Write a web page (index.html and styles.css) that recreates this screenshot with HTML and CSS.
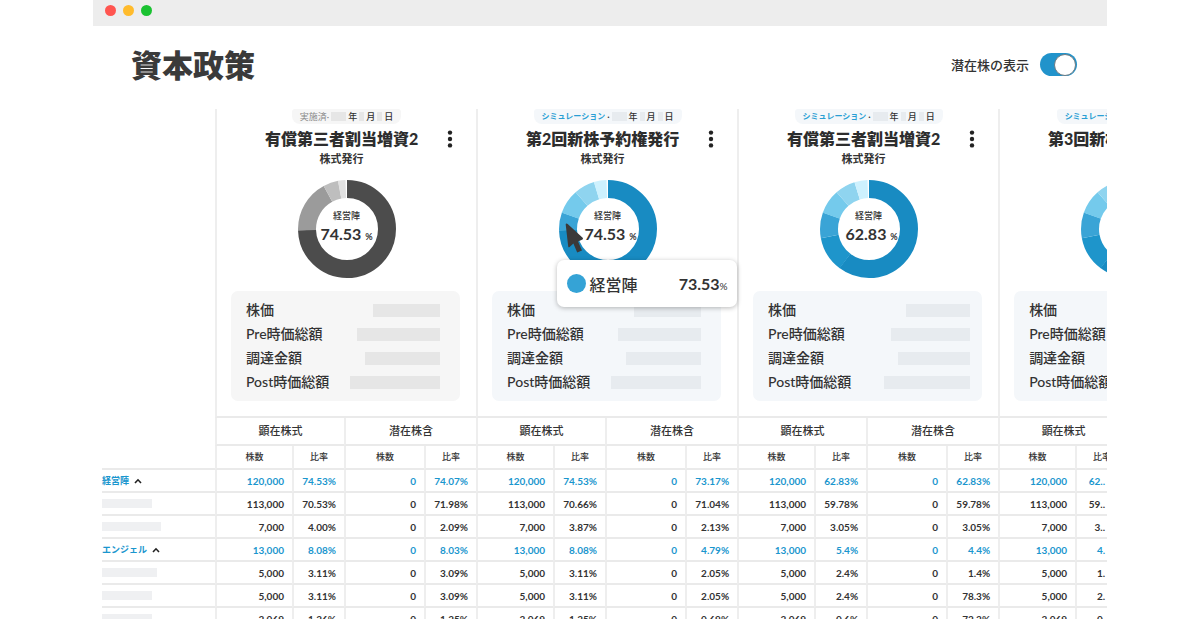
FILE: index.html
```html
<!DOCTYPE html>
<html lang="ja">
<head>
<meta charset="utf-8">
<meta name="viewport" content="width=device-width, initial-scale=1">
<title>資本政策</title>
<link rel="stylesheet" href="styles.css">
</head>
<body>
<svg class="defs" aria-hidden="true">
  <defs>
    <symbol id="chart-blue" viewBox="0 0 98 98">
      <g fill="none" stroke-width="18" transform="rotate(-90 49 49)">
        <circle class="s1" cx="49" cy="49" r="40" pathLength="100" stroke-dasharray="60.3 100"/>
        <circle class="s2" cx="49" cy="49" r="40" pathLength="100" stroke-dasharray="11.8 100" stroke-dashoffset="-60.2"/>
        <circle class="s3" cx="49" cy="49" r="40" pathLength="100" stroke-dasharray="8.5 100" stroke-dashoffset="-72"/>
        <circle class="s4" cx="49" cy="49" r="40" pathLength="100" stroke-dasharray="8.1 100" stroke-dashoffset="-80.4"/>
        <circle class="s5" cx="49" cy="49" r="40" pathLength="100" stroke-dasharray="6.7 100" stroke-dashoffset="-88.5"/>
        <circle class="s6" cx="49" cy="49" r="40" pathLength="100" stroke-dasharray="4.3 100" stroke-dashoffset="-95.2"/>
      </g>
    </symbol>
    <symbol id="caret" viewBox="0 0 8 6"><path d="M1 5 4 1.8 7 5" fill="none" stroke="#222" stroke-width="1.6"/></symbol>
    <symbol id="dots" viewBox="0 0 6 18"><g fill="#222"><circle cx="3" cy="2.6" r="2.2"/><circle cx="3" cy="9" r="2.2"/><circle cx="3" cy="15.4" r="2.2"/></g></symbol>
  </defs>
</svg>
<div class="window">
  <div class="titlebar"><span class="light red"></span><span class="light yellow"></span><span class="light green"></span></div>
  <header class="head">
    <h1>資本政策</h1>
    <label class="toggle">潜在株の表示<input type="checkbox" role="switch" checked></label>
  </header>
  <main class="board">
    <table class="captable">
      <colgroup>
        <col class="c-label">
        <col class="c-shares"><col class="c-ratio"><col class="c-latent"><col class="c-ratio">
        <col class="c-shares"><col class="c-ratio"><col class="c-latent"><col class="c-ratio">
        <col class="c-shares"><col class="c-ratio"><col class="c-latent"><col class="c-ratio">
        <col class="c-shares"><col class="c-ratio">
      </colgroup>
      <thead>
        <tr class="rounds">
          <td class="corner"></td>
          <th colspan="4">
            <div class="card done">
              <div class="pill"><span class="state">実施済·</span><i class="blank wide"></i>年<i class="blank"></i>月<i class="blank"></i>日</div>
              <div class="name"><h2>有償第三者割当増資2</h2><button class="more" aria-label="メニュー"><svg><use href="#dots"/></svg></button></div>
              <p class="kind">株式発行</p>
              <div class="donut">
                <svg viewBox="0 0 98 98">
                  <g fill="none" stroke-width="18" transform="rotate(-90 49 49)">
                    <circle class="g1" cx="49" cy="49" r="40" pathLength="100" stroke-dasharray="74.6 100"/>
                    <circle class="g2" cx="49" cy="49" r="40" pathLength="100" stroke-dasharray="17.6 100" stroke-dashoffset="-74.5"/>
                    <circle class="g3" cx="49" cy="49" r="40" pathLength="100" stroke-dasharray="5 100" stroke-dashoffset="-92.1"/>
                    <circle class="g4" cx="49" cy="49" r="40" pathLength="100" stroke-dasharray="2.5 100" stroke-dashoffset="-97"/>
                  </g>
                </svg>
                <div class="center"><span>経営陣</span><b>74.53 <small>%</small></b></div>
              </div>
              <dl class="stats">
                <div><dt>株価</dt><dd class="w1"></dd></div>
                <div><dt>Pre時価総額</dt><dd class="w3"></dd></div>
                <div><dt>調達金額</dt><dd class="w2"></dd></div>
                <div><dt>Post時価総額</dt><dd class="w4"></dd></div>
              </dl>
            </div>
          </th>
          <th colspan="4">
            <div class="card">
              <div class="pill"><span class="state">シミュレーション</span> · <i class="blank wide"></i>年<i class="blank"></i>月<i class="blank"></i>日</div>
              <div class="name"><h2>第2回新株予約権発行</h2><button class="more" aria-label="メニュー"><svg><use href="#dots"/></svg></button></div>
              <p class="kind">株式発行</p>
              <div class="donut">
                <svg viewBox="0 0 98 98">
                  <g fill="none" stroke-width="18" transform="rotate(-90 49 49)">
                    <circle class="s1" cx="49" cy="49" r="40" pathLength="100" stroke-dasharray="74.6 100"/>
                    <circle class="s3" cx="49" cy="49" r="40" pathLength="100" stroke-dasharray="6 100" stroke-dashoffset="-74.5"/>
                    <circle class="s4" cx="49" cy="49" r="40" pathLength="100" stroke-dasharray="8.1 100" stroke-dashoffset="-80.4"/>
                    <circle class="s5" cx="49" cy="49" r="40" pathLength="100" stroke-dasharray="6.9 100" stroke-dashoffset="-88.5"/>
                    <circle class="s6" cx="49" cy="49" r="40" pathLength="100" stroke-dasharray="4.2 100" stroke-dashoffset="-95.3"/>
                  </g>
                </svg>
                <div class="center"><span>経営陣</span><b>74.53 <small>%</small></b></div>
                <svg class="cursor" viewBox="0 0 18 32"><path d="M1.5 0.5Q0.6 0.5 0.7 1.6L3.2 23.4Q3.5 24.8 4.6 23.9L8.4 20.6 12.2 29.6 17 27.5 13 18.4 17.5 16.4Q18.5 15.6 17.4 14.6L2.7 1Z" fill="#3b3939"/></svg>
                <div class="tip" role="tooltip"><i></i><span>経営陣</span><b>73.53<small>%</small></b></div>
              </div>
              <dl class="stats">
                <div><dt>株価</dt><dd class="w1"></dd></div>
                <div><dt>Pre時価総額</dt><dd class="w3"></dd></div>
                <div><dt>調達金額</dt><dd class="w2"></dd></div>
                <div><dt>Post時価総額</dt><dd class="w4"></dd></div>
              </dl>
            </div>
          </th>
          <th colspan="4">
            <div class="card">
              <div class="pill"><span class="state">シミュレーション</span> · <i class="blank wide"></i>年<i class="blank"></i>月<i class="blank"></i>日</div>
              <div class="name"><h2>有償第三者割当増資2</h2><button class="more" aria-label="メニュー"><svg><use href="#dots"/></svg></button></div>
              <p class="kind">株式発行</p>
              <div class="donut">
                <svg><use href="#chart-blue"/></svg>
                <div class="center"><span>経営陣</span><b>62.83 <small>%</small></b></div>
              </div>
              <dl class="stats narrow">
                <div><dt>株価</dt><dd class="w1"></dd></div>
                <div><dt>Pre時価総額</dt><dd class="w3"></dd></div>
                <div><dt>調達金額</dt><dd class="w2"></dd></div>
                <div><dt>Post時価総額</dt><dd class="w4"></dd></div>
              </dl>
            </div>
          </th>
          <th colspan="2">
            <div class="card cut">
              <div class="pill"><span class="state">シミュレーション</span></div>
              <div class="name"><h2>第3回新株予約権発行</h2></div>
              <p class="kind"></p>
              <div class="donut"><svg><use href="#chart-blue"/></svg></div>
              <dl class="stats">
                <div><dt>株価</dt></div>
                <div><dt>Pre時価総額</dt></div>
                <div><dt>調達金額</dt></div>
                <div><dt>Post時価総額</dt></div>
              </dl>
            </div>
          </th>
        </tr>
        <tr class="groups">
          <td class="corner"></td>
          <th colspan="2">顕在株式</th><th colspan="2">潜在株含</th>
          <th colspan="2">顕在株式</th><th colspan="2">潜在株含</th>
          <th colspan="2">顕在株式</th><th colspan="2">潜在株含</th>
          <th colspan="2">顕在株式</th>
        </tr>
        <tr class="units">
          <td></td>
          <th>株数</th><th>比率</th><th>株数</th><th>比率</th>
          <th>株数</th><th>比率</th><th>株数</th><th>比率</th>
          <th>株数</th><th>比率</th><th>株数</th><th>比率</th>
          <th>株数</th><th>比率</th>
        </tr>
      </thead>
      <tbody>
        <tr class="sum"><th><button>経営陣<svg><use href="#caret"/></svg></button></th><td>120,000</td><td>74.53%</td><td>0</td><td>74.07%</td><td>120,000</td><td>74.53%</td><td>0</td><td>73.17%</td><td>120,000</td><td>62.83%</td><td>0</td><td>62.83%</td><td>120,000</td><td>62..</td></tr>
        <tr><th><i class="holder"></i></th><td>113,000</td><td>70.53%</td><td>0</td><td>71.98%</td><td>113,000</td><td>70.66%</td><td>0</td><td>71.04%</td><td>113,000</td><td>59.78%</td><td>0</td><td>59.78%</td><td>113,000</td><td>59..</td></tr>
        <tr><th><i class="holder long"></i></th><td>7,000</td><td>4.00%</td><td>0</td><td>2.09%</td><td>7,000</td><td>3.87%</td><td>0</td><td>2.13%</td><td>7,000</td><td>3.05%</td><td>0</td><td>3.05%</td><td>7,000</td><td>3..</td></tr>
        <tr class="sum"><th><button>エンジェル<svg><use href="#caret"/></svg></button></th><td>13,000</td><td>8.08%</td><td>0</td><td>8.03%</td><td>13,000</td><td>8.08%</td><td>0</td><td>4.79%</td><td>13,000</td><td>5.4%</td><td>0</td><td>4.4%</td><td>13,000</td><td>4.</td></tr>
        <tr><th><i class="holder mid"></i></th><td>5,000</td><td>3.11%</td><td>0</td><td>3.09%</td><td>5,000</td><td>3.11%</td><td>0</td><td>2.05%</td><td>5,000</td><td>2.4%</td><td>0</td><td>1.4%</td><td>5,000</td><td>1.</td></tr>
        <tr><th><i class="holder"></i></th><td>5,000</td><td>3.11%</td><td>0</td><td>3.09%</td><td>5,000</td><td>3.11%</td><td>0</td><td>2.05%</td><td>5,000</td><td>2.4%</td><td>0</td><td>78.3%</td><td>5,000</td><td>2.</td></tr>
        <tr><th><i class="holder"></i></th><td>2,069</td><td>1.26%</td><td>0</td><td>1.25%</td><td>2,069</td><td>1.25%</td><td>0</td><td>0.69%</td><td>2,069</td><td>0.6%</td><td>0</td><td>72.2%</td><td>2,069</td><td>0.</td></tr>
      </tbody>
    </table>
  </main>
</div>
</body>
</html>
```
FILE: styles.css
```css
* { box-sizing: border-box; }

body {
  margin: 0;
  height: 100vh;
  overflow: hidden;
  background: #fff;
  color: #333;
  font-family: Lato, "Noto Sans CJK JP", sans-serif;
}

h1, h2, p, dl, dd { margin: 0; }
button { padding: 0; border: 0; background: none; font: inherit; color: inherit; cursor: pointer; }
.defs { position: absolute; width: 0; height: 0; }

.window { height: 100%; margin: 0 93px; overflow: hidden; }

.titlebar {
  display: flex;
  align-items: center;
  gap: 7px;
  height: 26px;
  padding: 0 12px 5px;
  background: #ededed;
}
.light { width: 11px; height: 11px; border-radius: 50%; }
.red { background: #ff5550; }
.yellow { background: #ffbb2c; }
.green { background: #1ac231; }

.head {
  display: flex;
  align-items: center;
  justify-content: space-between;
  height: 83px;
  padding: 0 30px 6px 38px;
}
h1 { font-size: 31px; line-height: 40px; font-weight: 900; color: #3a3a3a; }
.toggle { display: flex; align-items: center; gap: 11px; font-size: 13px; font-weight: 500; white-space: nowrap; }
.toggle input {
  appearance: none;
  display: flex;
  justify-content: flex-end;
  align-items: center;
  width: 37px;
  height: 23px;
  margin: 0;
  padding: 0 1px;
  border-radius: 12px;
  background: #2193cb;
}
.toggle input::before {
  content: "";
  width: 20px;
  height: 20px;
  border: 1px solid #6d7b83;
  border-radius: 50%;
  background: #fff;
}

.board { padding-left: 9px; }
.captable { width: 1025px; border-spacing: 0; table-layout: fixed; white-space: nowrap; }
.c-label { width: 113px; }
.c-shares { width: 77px; }
.c-ratio { width: 52px; }
.c-latent { width: 80px; }
.captable th, .captable td {
  padding: 0;
  border-left: 2px solid #eee;
  border-bottom: 2px solid #eaeaea;
}
.captable tr > :first-child { border-left: 0; }
.captable .corner { border-bottom: 0; }
.captable .rounds th { vertical-align: top; font-weight: 400; }

.card { display: flex; flex-direction: column; align-items: center; height: 307px; }
.pill {
  display: flex;
  align-items: center;
  justify-content: center;
  gap: 2px;
  height: 15px;
  padding: 0 8px;
  border-radius: 3px 3px 8px 8px;
  background: #f4f7fa;
  font-size: 9px;
  line-height: 15px;
  font-weight: 500;
}
.state { color: #2a9fd4; font-size: 8px; font-weight: 700; }
.blank { width: 5px; height: 9px; background: #e7ebef; }
.blank.wide { width: 15px; }
.name { display: grid; grid-template-columns: 1fr auto 1fr; align-items: center; width: 100%; height: 30px; }
.name h2 { grid-column: 2; padding-right: 10px; font-size: 16px; line-height: 24px; font-weight: 900; color: #2d2d2d; }
.more { justify-self: end; width: 16px; height: 22px; margin-right: 18px; }
.more svg { display: block; width: 6px; height: 18px; margin: 2px auto; }
.kind { height: 26px; padding-right: 10px; font-size: 11px; line-height: 10px; font-weight: 700; }

.donut { position: relative; display: grid; place-items: center; width: 98px; height: 98px; }
.donut > * { grid-area: 1 / 1; }
.donut > svg:first-child { width: 98px; height: 98px; }
.s1 { stroke: #188bc2; }
.s2 { stroke: #1e95cb; }
.s3 { stroke: #3aa4d6; }
.s4 { stroke: #74caec; }
.s5 { stroke: #8fd4ef; }
.s6 { stroke: #cdf1fe; }
.g1 { stroke: #4c4c4c; }
.g2 { stroke: #9b9b9b; }
.g3 { stroke: #bebebe; }
.g4 { stroke: #e1e1e1; }
.center { display: flex; flex-direction: column; align-items: center; font-size: 9px; line-height: 12px; font-weight: 500; }
.center span { padding-top: 1px; }
.center b { padding-left: 6px; font-size: 16px; line-height: 24px; font-weight: 700; }
.done .center b { padding-left: 0; }
.center small { font-size: 9px; }
.donut .cursor { position: absolute; left: 6px; top: 43px; width: 18px; height: 32px; }
.tip {
  position: absolute;
  left: -2px;
  top: 80px;
  display: flex;
  align-items: center;
  width: 180px;
  height: 47px;
  padding: 0 9px 0 10px;
  border-radius: 7px;
  background: #fff;
  box-shadow: 0 1px 5px rgba(0, 0, 0, .28);
  font-size: 16px;
  font-weight: 500;
}
.tip i { width: 19px; height: 19px; margin-right: 4px; border-radius: 50%; background: #35a3d6; }
.tip b { margin-left: auto; font-weight: 700; }
.tip small { font-size: 10px; font-weight: 400; }

.stats {
  display: flex;
  flex-direction: column;
  align-self: stretch;
  margin: 13px 16px 0 14px;
  padding: 7px 20px 7px 15px;
  border-radius: 7px;
  background: #f4f7fa;
  font-size: 14px;
  line-height: 24px;
  font-weight: 500;
}
.stats.narrow { padding-right: 12px; }
.stats div { display: flex; align-items: center; justify-content: space-between; height: 24px; }
.stats dd { height: 13px; background: #e7ebef; }
.w1 { width: 67px; }
.w2 { width: 75px; }
.w3 { width: 83px; }
.w4 { width: 90px; }
.narrow .w1 { width: 64px; }
.narrow .w2 { width: 72px; }
.narrow .w3 { width: 79px; }
.narrow .w4 { width: 86px; }

.done .pill, .done .stats { background: #f6f6f6; }
.done .state { color: #888; font-size: 9px; font-weight: 400; }
.done .blank, .done dd { background: #e6e6e6; }
.card.cut { width: 259px; }
.cut .pill { width: 146px; justify-content: flex-start; }

.groups { height: 28px; font-size: 11px; line-height: 16px; }
.units { height: 24px; font-size: 9px; line-height: 16px; }
.groups th, .units th { font-weight: 500; }

tbody tr { height: 23px; font-size: 10px; line-height: 16px; font-weight: 700; }
tbody th { text-align: left; }
.captable tbody td { padding-right: 8px; text-align: right; }
.captable tbody td:last-child { padding-right: 22px; }
.sum { color: #1a96ce; }
.sum button { display: flex; align-items: center; gap: 5px; height: 18px; font-size: 9px; }
.sum svg { width: 8px; height: 6px; }
.holder { display: block; width: 50px; height: 9px; background: #eff0f2; }
.holder.mid { width: 55px; }
.holder.long { width: 59px; }
```
